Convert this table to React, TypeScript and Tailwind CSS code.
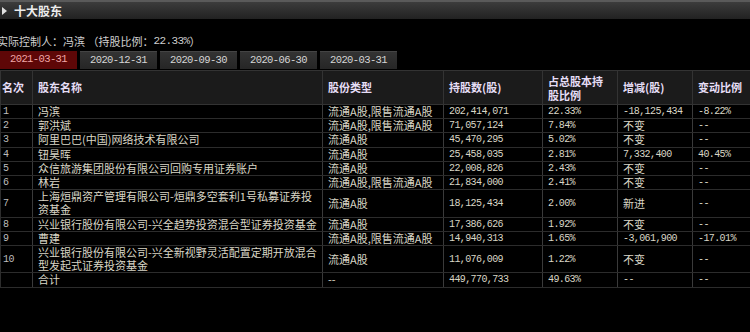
import React from "react";

type Row = {
  rank: string;
  name: string[];
  type: string;
  shares: string;
  pct: string;
  change: string;
  ratio: string;
};

const rows: Row[] = [
  { rank: "1", name: ["冯滨"], type: "流通A股,限售流通A股", shares: "202,414,071", pct: "22.33%", change: "-18,125,434", ratio: "-8.22%" },
  { rank: "2", name: ["郭洪斌"], type: "流通A股,限售流通A股", shares: "71,057,124", pct: "7.84%", change: "不变", ratio: "--" },
  { rank: "3", name: ["阿里巴巴(中国)网络技术有限公司"], type: "流通A股", shares: "45,470,295", pct: "5.02%", change: "不变", ratio: "--" },
  { rank: "4", name: ["钮昊晖"], type: "流通A股", shares: "25,458,035", pct: "2.81%", change: "7,332,400", ratio: "40.45%" },
  { rank: "5", name: ["众信旅游集团股份有限公司回购专用证券账户"], type: "流通A股", shares: "22,008,826", pct: "2.43%", change: "不变", ratio: "--" },
  { rank: "6", name: ["林岩"], type: "流通A股,限售流通A股", shares: "21,834,000", pct: "2.41%", change: "不变", ratio: "--" },
  { rank: "7", name: ["上海烜鼎资产管理有限公司-烜鼎多空套利1号私募证券投", "资基金"], type: "流通A股", shares: "18,125,434", pct: "2.00%", change: "新进", ratio: "--" },
  { rank: "8", name: ["兴业银行股份有限公司-兴全趋势投资混合型证券投资基金"], type: "流通A股", shares: "17,386,626", pct: "1.92%", change: "不变", ratio: "--" },
  { rank: "9", name: ["曹建"], type: "流通A股,限售流通A股", shares: "14,940,313", pct: "1.65%", change: "-3,061,900", ratio: "-17.01%" },
  { rank: "10", name: ["兴业银行股份有限公司-兴全新视野灵活配置定期开放混合", "型发起式证券投资基金"], type: "流通A股", shares: "11,076,009", pct: "1.22%", change: "不变", ratio: "--" },
  { rank: "", name: ["合计"], type: "--", shares: "449,770,733", pct: "49.63%", change: "--", ratio: "--" },
];

const tabs = ["2021-03-31", "2020-12-31", "2020-09-30", "2020-06-30", "2020-03-31"];

const cjk = "font-['SimSun','Noto_Sans_CJK_SC',sans-serif]";
const mono = "font-['Liberation_Mono','Noto_Sans_CJK_SC',monospace] tracking-[-0.6px]";

function isNum(s: string) {
  return /^[-\d]/.test(s) && s !== "--";
}

export default function App() {
  return (
    <div className={`w-[750px] h-[332px] bg-black overflow-hidden ${cjk} text-[11px]`}>
      {/* 标题栏 */}
      <div className="h-[19px] border-t-2 border-[#5a5a5a] bg-gradient-to-b from-[#3c3c3c] to-[#222222] flex items-center">
        <svg width="6" height="8" viewBox="0 0 6 8" className="ml-[2px]">
          <path d="M0 0 L5 4 L0 8 Z" fill="#e0e0e0" />
        </svg>
        <span className="ml-[6px] text-[12px] font-bold text-[#ececec]">十大股东</span>
      </div>

      <div className="h-[32px] flex items-end pb-[2px] -ml-[3px] text-[#cfcfcf] whitespace-nowrap">
        实际控制人：冯滨 （持股比例：<span className={mono}>22.33%</span>）
      </div>

      {/* 报告期 */}
      <div className="flex gap-[3px] h-[18px]">
        {tabs.map((t, i) => (
          <div
            key={t}
            className={`w-[77px] flex items-center justify-center ${mono} text-[10.5px] ${
              i === 0
                ? "bg-[#5e0707] text-[#f0a8a8]"
                : "bg-gradient-to-b from-[#333333] to-[#262626] text-[#d6d6d6] border-t border-[#444]"
            }`}
          >
            {t}
          </div>
        ))}
      </div>

      <table className="table-fixed border-collapse w-[750px] mt-[1px]">
        <colgroup>
          <col className="w-[32px]" />
          <col className="w-[290px]" />
          <col className="w-[121px]" />
          <col className="w-[99px]" />
          <col className="w-[75px]" />
          <col className="w-[75px]" />
          <col className="w-[58px]" />
        </colgroup>
        <thead>
          <tr className="h-[34px] bg-[#1b1b1b] text-[#e6def6] font-bold text-left">
            <th className="border border-[#333] pl-[1px] font-bold">名次</th>
            <th className="border border-[#333] pl-[5px] font-bold">股东名称</th>
            <th className="border border-[#333] pl-[5px] font-bold">股份类型</th>
            <th className="border border-[#333] pl-[5px] font-bold">持股数(股)</th>
            <th className="border border-[#333] pl-[5px] font-bold leading-[14px]">
              占总股本持
              <br />
              股比例
            </th>
            <th className="border border-[#333] pl-[5px] font-bold">增减(股)</th>
            <th className="border border-[#333] pl-[5px] font-bold">变动比例</th>
          </tr>
        </thead>
        <tbody className="text-[#d9d6c6] leading-[13.2px]">
          {rows.map((r, i) => (
            <tr key={i} className="bg-black">
              <td className={`border border-[#2c2c2c] border-r-[#3a3a3a] pl-[2px] text-[#bdbdbd] ${mono} text-[10px]`}>{r.rank}</td>
              <td className="border border-[#2c2c2c] border-r-[#3a3a3a] pl-[5px]">
                {r.name.map((n, j) => (
                  <div key={j}>{n}</div>
                ))}
              </td>
              <td className="border border-[#2c2c2c] border-r-[#3a3a3a] pl-[5px] whitespace-nowrap">{r.type}</td>
              <td className={`border border-[#2c2c2c] border-r-[#3a3a3a] pl-[5px] ${mono} text-[10px]`}>{r.shares}</td>
              <td className={`border border-[#2c2c2c] border-r-[#3a3a3a] pl-[5px] ${mono} text-[10px]`}>{r.pct}</td>
              <td className={`border border-[#2c2c2c] border-r-[#3a3a3a] pl-[5px] ${isNum(r.change) || r.change === "--" ? `${mono} text-[10px]` : ""}`}>
                {r.change}
              </td>
              <td className={`border border-[#2c2c2c] pl-[5px] ${mono} text-[10px]`}>{r.ratio}</td>
            </tr>
          ))}
        </tbody>
      </table>
    </div>
  );
}
